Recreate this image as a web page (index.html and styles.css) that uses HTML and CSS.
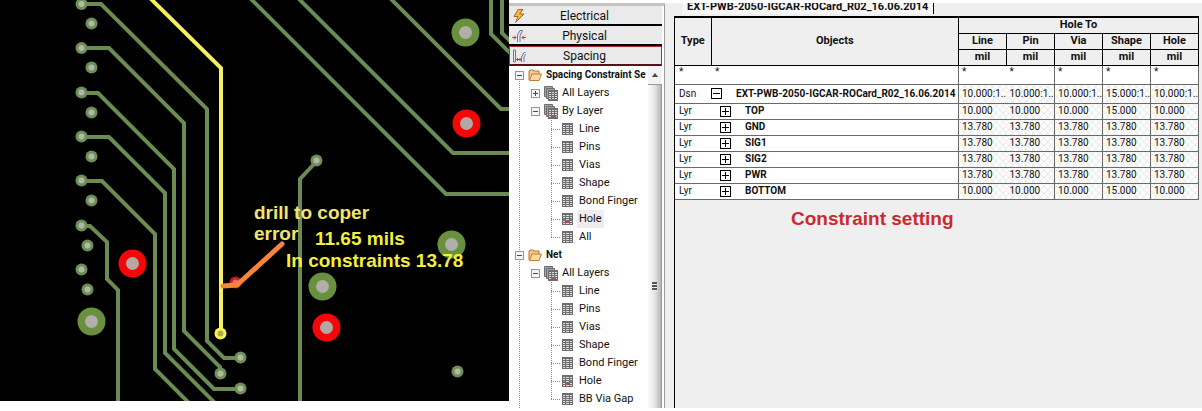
FILE: index.html
```html
<!DOCTYPE html>
<html lang="en">
<head>
<meta charset="utf-8">
<title>Constraint Manager</title>
<link rel="stylesheet" href="styles.css">
</head>
<body>
<svg class="defs" width="0" height="0" aria-hidden="true">
  <defs>
    <symbol id="folder" viewBox="0 0 14 14">
      <path d="M1 12V3l1-1h3l1 1h5v3" fill="#f3c98c" stroke="#b5752f"/>
      <path d="M1.500 12.500L4 6h9.500L11 12.500z" fill="#fbd9a0" stroke="#c07d35"/>
    </symbol>
    <symbol id="grid" viewBox="0 0 11 12">
      <path d="M0 0h11v12H0z" fill="#6c6e70"/>
      <path d="M1 2h2v1H1zM4 2h3v1H4zM8 2h2v1H8zM1 4h2v1H1zM4 4h3v1H4zM8 4h2v1H8zM1 6h2v1H1zM4 6h3v1H4zM8 6h2v1H8zM1 8h2v1H1zM4 8h3v1H4zM8 8h2v1H8zM1 10h2v1H1zM4 10h3v1H4zM8 10h2v1H8z" fill="#dcdcdc"/>
    </symbol>
    <symbol id="layers" viewBox="0 0 14 15">
      <path d="M.5.500h8v10h-8z" fill="#a2a4a6" stroke="#6c6e70"/>
      <path d="M2.500 2.500h8v10h-8z" fill="#a2a4a6" stroke="#6c6e70"/>
      <path d="M4 4h10v11H4z" fill="#6c6e70"/>
      <path d="M5 6h2v1H5zM8 6h2v1H8zM11 6h2v1h-2zM5 8h2v1H5zM8 8h2v1H8zM11 8h2v1h-2zM5 10h2v1H5zM8 10h2v1H8zM11 10h2v1h-2zM5 12h2v1H5zM8 12h2v1H8zM11 12h2v1h-2z" fill="#dcdcdc"/>
    </symbol>
    <g id="pad"><circle r="6" fill="#6f8f59"/><circle r="3" fill="#b0b9a4"/></g>
    <g id="via"><circle r="14" fill="#68903f"/><circle r="6.500" fill="#b2aea9"/></g>
    <g id="hot"><circle r="14" fill="#f20808"/><circle r="6.500" fill="#b2a8a4"/></g>
  </defs>
</svg>
<main class="screen">
  <svg class="board" viewBox="0 0 509 401" role="img" aria-label="Board layout">
    <path d="M0 0h509v401H0z"/>
    <g class="trace">
      <path d="M81 4h20L207 109v232l17 17h16"/>
      <path d="M81 48h28l75 75v208l36 36v6"/>
      <path d="M81 93h17l76 76v180l40 40h26"/>
      <path d="M81 137h28l56 56v160l50 50"/>
      <path d="M81 181h21l53 53v135l35 35"/>
      <path d="M81 226h9l17 16v37l11 11v112"/>
      <path d="M250-2L446 194h64"/>
      <path d="M298-2L453 153h57"/>
      <path d="M390-2L501 109h9"/>
      <path d="M491-2v36l20 20"/>
      <path d="M502-2v35l9 9"/>
      <path d="M316 162l-16 17v223"/>
    </g>
    <use href="#pad" x="81.500" y="4"/><use href="#pad" x="81.500" y="48"/><use href="#pad" x="81.500" y="92.500"/>
    <use href="#pad" x="81.500" y="136.500"/><use href="#pad" x="81.500" y="180.500"/><use href="#pad" x="81.500" y="225.500"/>
    <use href="#pad" x="91.500" y="23.500"/><use href="#pad" x="91.500" y="67.500"/><use href="#pad" x="91.500" y="112.500"/>
    <use href="#pad" x="91.500" y="156.500"/><use href="#pad" x="91.500" y="200.500"/><use href="#pad" x="87.500" y="245.500"/>
    <use href="#pad" x="81.500" y="269.500"/><use href="#pad" x="87.500" y="289.500"/><use href="#pad" x="240.500" y="357.500"/>
    <use href="#pad" x="240.500" y="388.500"/><use href="#pad" x="220.500" y="373.500"/><use href="#pad" x="316.500" y="160.500"/>
    <use href="#pad" x="457.500" y="371.500"/>
    <use href="#via" x="91.500" y="321.500"/><use href="#via" x="465.500" y="32.500"/>
    <use href="#via" x="322.500" y="286.500"/><use href="#via" x="451.500" y="244.500"/>
    <use href="#hot" x="132.500" y="263.500"/><use href="#hot" x="466.500" y="123.500"/><use href="#hot" x="326.500" y="327.500"/>
    <path class="net" d="M150-2l71 70v265"/>
    <circle cx="220.500" cy="333.500" r="6" fill="#f8f652"/><circle cx="220.500" cy="333.500" r="3" fill="#b3ae4c"/>
    <circle cx="235.500" cy="282.500" r="6" fill="#c41f22"/><circle cx="235.500" cy="282.500" r="3" fill="#e2716a"/>
    <path class="pointer" d="M223 286l14-1 45-41"/>
    <g class="note">
      <text class="pale" x="254" y="219">drill to coper</text>
      <text class="pale" x="254" y="240">error</text>
      <text x="315" y="245">11.65 mils</text>
      <text x="286" y="267">In constraints 13.78</text>
    </g>
  </svg>

  <nav class="sidebar" aria-label="Worksheets">
    <div class="tabs">
      <button class="tab"><svg class="tab-icon" viewBox="0 0 14 14"><path d="M6 .5h5L7.500 5H12L3.500 13.500 6 7.500H2z" fill="#f8b83c" stroke="#a9642a"/></svg><span>Electrical</span></button>
      <button class="tab"><svg class="tab-icon" viewBox="0 0 14 14" fill="none"><path d="M5.500 13V6L8 1.500h2.500L8 7v6" stroke="#5f76a0"/><path d="M0 8.500h4M2 6.500l2 2-2 2M14 8.500h-4M12 6.500l-2 2 2 2" stroke="#c23a40"/></svg><span>Physical</span></button>
      <button class="tab active"><svg class="tab-icon" viewBox="0 0 14 14" fill="none"><path d="M1.500 1v12h2V1zM9.500 13V8L12 3.500h1.500M12 13V8l1.500-3" stroke="#6478a8"/><path d="M4 10.500h5M6 9l-1.500 1.500L6 12M7.500 9L9 10.500 7.500 12" stroke="#c23a40"/></svg><span>Spacing</span></button>
    </div>
    <div class="tree-area">
      <ul class="tree">
        <li>
          <div class="row root"><button class="twisty" aria-label="Collapse"></button><svg class="folder"><use href="#folder"/></svg><b>Spacing Constraint Se</b></div>
          <ul>
            <li><div class="row group"><button class="twisty closed" aria-label="Expand"></button><svg class="layers"><use href="#layers"/></svg><span>All Layers</span></div></li>
            <li>
              <div class="row group"><button class="twisty" aria-label="Collapse"></button><svg class="layers"><use href="#layers"/><path d="M7 12h5v2H7z" fill="#b8474c"/></svg><span>By Layer</span></div>
              <ul class="leaves">
                <li class="row leaf"><svg class="grid"><use href="#grid"/></svg><span>Line</span></li>
                <li class="row leaf"><svg class="grid"><use href="#grid"/></svg><span>Pins</span></li>
                <li class="row leaf"><svg class="grid"><use href="#grid"/></svg><span>Vias</span></li>
                <li class="row leaf"><svg class="grid"><use href="#grid"/></svg><span>Shape</span></li>
                <li class="row leaf"><svg class="grid"><use href="#grid"/></svg><span>Bond Finger</span></li>
                <li class="row leaf"><svg class="grid"><use href="#grid"/><path d="M4 8h3v2H4z" fill="#b8474c"/><path d="M1 6h2v1H1zM8 6h2v1H8z" fill="#5f9a62"/></svg><span class="selected">Hole</span></li>
                <li class="row leaf"><svg class="grid"><use href="#grid"/></svg><span>All</span></li>
              </ul>
            </li>
          </ul>
        </li>
        <li>
          <div class="row root"><button class="twisty" aria-label="Collapse"></button><svg class="folder"><use href="#folder"/></svg><b>Net</b></div>
          <ul>
            <li>
              <div class="row group"><button class="twisty" aria-label="Collapse"></button><svg class="layers"><use href="#layers"/><path d="M7 12h5v2H7z" fill="#b8474c"/></svg><span>All Layers</span></div>
              <ul class="leaves">
                <li class="row leaf"><svg class="grid"><use href="#grid"/></svg><span>Line</span></li>
                <li class="row leaf"><svg class="grid"><use href="#grid"/></svg><span>Pins</span></li>
                <li class="row leaf"><svg class="grid"><use href="#grid"/></svg><span>Vias</span></li>
                <li class="row leaf"><svg class="grid"><use href="#grid"/></svg><span>Shape</span></li>
                <li class="row leaf"><svg class="grid"><use href="#grid"/></svg><span>Bond Finger</span></li>
                <li class="row leaf"><svg class="grid"><use href="#grid"/><path d="M4 8h3v2H4z" fill="#b8474c"/><path d="M1 6h2v1H1zM8 6h2v1H8z" fill="#5f9a62"/></svg><span>Hole</span></li>
                <li class="row leaf"><svg class="grid"><use href="#grid"/></svg><span>BB Via Gap</span></li>
              </ul>
            </li>
          </ul>
        </li>
      </ul>
      <div class="scrollbar">
        <button class="scroll-up" aria-label="Scroll up"><svg viewBox="0 0 6 4"><path d="M0 4l3-4 3 4z" fill="#444"/></svg></button>
        <div class="thumb"><i></i></div>
      </div>
    </div>
  </nav>

  <section class="worksheet">
    <div class="sheet-tabs"><span class="sheet-tab">EXT-PWB-2050-IGCAR-ROCard_R02_16.06.2014</span></div>
    <div class="sheet">
      <table class="constraints">
        <colgroup><col class="c-type"><col><col class="c-value"><col class="c-value"><col class="c-value"><col class="c-value"><col class="c-value"></colgroup>
        <thead>
          <tr><th rowspan="3">Type</th><th rowspan="3">Objects</th><th colspan="5">Hole To</th></tr>
          <tr><th>Line</th><th>Pin</th><th>Via</th><th>Shape</th><th>Hole</th></tr>
          <tr><th>mil</th><th>mil</th><th>mil</th><th>mil</th><th>mil</th></tr>
        </thead>
        <tbody>
          <tr class="filter"><td>*</td><td>*</td><td>*</td><td>*</td><td>*</td><td>*</td><td>*</td></tr>
          <tr class="design"><td>Dsn</td><td><div class="object"><button class="box" aria-label="Collapse"></button><b>EXT-PWB-2050-IGCAR-ROCard_R02_16.06.2014</b></div></td><td>10.000:1..</td><td>10.000:1..</td><td>10.000:1..</td><td>15.000:1..</td><td>10.000:1..</td></tr>
          <tr class="layer"><td>Lyr</td><td><div class="object"><button class="box closed" aria-label="Expand"></button><b>TOP</b></div></td><td>10.000</td><td>10.000</td><td>10.000</td><td>15.000</td><td>10.000</td></tr>
          <tr class="layer"><td>Lyr</td><td><div class="object"><button class="box closed" aria-label="Expand"></button><b>GND</b></div></td><td>13.780</td><td>13.780</td><td>13.780</td><td>13.780</td><td>13.780</td></tr>
          <tr class="layer"><td>Lyr</td><td><div class="object"><button class="box closed" aria-label="Expand"></button><b>SIG1</b></div></td><td>13.780</td><td>13.780</td><td>13.780</td><td>13.780</td><td>13.780</td></tr>
          <tr class="layer"><td>Lyr</td><td><div class="object"><button class="box closed" aria-label="Expand"></button><b>SIG2</b></div></td><td>13.780</td><td>13.780</td><td>13.780</td><td>13.780</td><td>13.780</td></tr>
          <tr class="layer"><td>Lyr</td><td><div class="object"><button class="box closed" aria-label="Expand"></button><b>PWR</b></div></td><td>13.780</td><td>13.780</td><td>13.780</td><td>13.780</td><td>13.780</td></tr>
          <tr class="layer"><td>Lyr</td><td><div class="object"><button class="box closed" aria-label="Expand"></button><b>BOTTOM</b></div></td><td>10.000</td><td>10.000</td><td>10.000</td><td>15.000</td><td>10.000</td></tr>
        </tbody>
      </table>
      <p class="caption">Constraint setting</p>
    </div>
  </section>
</main>
</body>
</html>
```
FILE: styles.css
```css
* { box-sizing: border-box; }

body {
  margin: 0;
  background: #fff;
  color: #111;
  font: 10px/14px Roboto, "Liberation Sans", sans-serif;
}

button { font: inherit; color: inherit; padding: 0; margin: 0; border: 0; background: none; }
ul { list-style: none; margin: 0; padding: 0; }
.defs { position: absolute; }

.screen {
  display: grid;
  grid-template-columns: 509fr 156px 537fr;
  align-items: start;
}

/* Board view */
.board { display: block; width: 100%; height: auto; }
.trace { fill: none; stroke: #6b8b53; stroke-width: 4; }
.net { fill: none; stroke: #f5ef62; stroke-width: 4; }
.pointer { fill: none; stroke: #f7843a; stroke-width: 5; stroke-linecap: round; stroke-linejoin: round; }
.note { font: bold 19px "Liberation Sans", sans-serif; fill: #f2ee3c; }
.note .pale { fill: #f0e56c; }

/* Worksheet selector */
.sidebar {
  align-self: stretch;
  margin-top: 3px;
  border-top: 3px solid #c4c4c0;
  border-right: 1px solid #9a9a9a;
  font-size: 11px;
}
.tab {
  display: grid;
  grid-template-columns: 14px 1fr 16px;
  align-items: center;
  width: 153px;
  height: 20px;
  padding: 1px 3px 0;
  border-bottom: 2px solid #000;
  background: #eaeaea;
  font-size: 12px;
}
.tab.active { border: 1px solid #b02a30; border-bottom: 2px solid #5a1014; padding: 0 2px; }
.tab-icon { width: 14px; height: 14px; }

.tree-area { display: grid; grid-template-columns: minmax(0, 1fr) 14px; padding-right: 2px; }
.tree {
  background: repeating-linear-gradient(#8c8c8c 0 1px, transparent 1px 2px) 10px 9px / 1px 100% no-repeat;
}
.row { display: flex; align-items: center; height: 18px; white-space: nowrap; }
.row svg { flex: none; }
.row b { font-size: 10px; }
.root { padding-left: 6px; }
.root .folder { width: 14px; height: 14px; margin: 0 4px; }
.group { padding-left: 22px; }
.layers { width: 14px; height: 15px; margin: 0 4px; }
.leaves { background: repeating-linear-gradient(#8c8c8c 0 1px, transparent 1px 2px) 42px 0 / 1px calc(100% - 9px) no-repeat; }
.leaf {
  padding-left: 53px;
  background: repeating-linear-gradient(90deg, #8c8c8c 0 1px, transparent 1px 2px) 42px 9px / 9px 1px no-repeat;
}
.grid { width: 11px; height: 12px; margin-right: 4px; }
.leaf span { padding: 0 2px; line-height: 18px; }
.leaf .selected { background: #efebee; }

.twisty {
  flex: none;
  width: 9px;
  height: 9px;
  border: 1px solid #8e96a2;
  background: linear-gradient(#334a80, #334a80) center / 5px 1px no-repeat, #f6f6f6;
}
.twisty.closed {
  background: linear-gradient(#334a80, #334a80) center / 5px 1px no-repeat,
    linear-gradient(#334a80, #334a80) center / 1px 5px no-repeat, #f6f6f6;
}

.scrollbar { display: flex; flex-direction: column; }
.scroll-up { display: grid; place-items: center; height: 18px; background: #f3f3f3; }
.scroll-up svg { width: 6px; height: 4px; }
.thumb {
  flex: 1;
  display: grid;
  place-items: center;
  padding-top: 80px;
  border-top: 1px solid #999;
  background: linear-gradient(90deg, #fafafa, #e6e6e6 50%, #b4b4b4);
  border-right: 1px solid #999;
}
.thumb i { width: 5px; height: 9px; background: repeating-linear-gradient(#555 0 2px, #eee 2px 3px); }

/* Constraint worksheet */
.worksheet {
  align-self: stretch;
  display: flex;
  flex-direction: column;
  margin-top: 3px;
  padding-left: 9px;
  background: #efefef;
}
.sheet-tabs { display: flex; height: 13px; padding: 0 0 2px 8px; }
.sheet-tab {
  display: flex;
  align-items: flex-end;
  overflow: hidden;
  padding: 0 5px;
  border-right: 1px solid #000;
  background: #f6f6f6;
  font-size: 11px;
  font-weight: bold;
  line-height: 15px;
}
.sheet { flex: 1; padding-right: 3px; border-left: 1px solid #000; }
.constraints { width: 100%; table-layout: fixed; border-collapse: collapse; border-top: 2px solid #111; background: #fff; }
.c-type { width: 36px; }
.c-value { width: 48px; }
.constraints tr { height: 16px; }
.constraints th { padding: 0; border: 1px solid #000; background: #efefef; font-size: 11px; line-height: 12px; }
.constraints thead tr:first-child th { border-top-width: 2px; }
.constraints thead tr:first-child th:first-child { border-left: 0; }
.constraints td { padding: 0 0 0 4px; border: 1px solid #6a6a6a; line-height: 12px; white-space: nowrap; }
.constraints td:nth-child(1) { border-left: 0; border-right: 0; }
.constraints td:nth-child(2) { border-left: 0; }
.constraints td:nth-child(3) { border-right: 0; }
.constraints td:nth-child(4) { border-left: 0; }
.constraints td:nth-child(n+3) { padding-left: 3px; }
.constraints .filter { height: 19px; vertical-align: top; }
.constraints .design { height: 19px; }
.design td:nth-child(n+3),
.layer td:nth-child(n+3) {
  background: repeating-linear-gradient(45deg, #e2e2e2 0 1px, transparent 1px 5px),
    repeating-linear-gradient(-45deg, #e2e2e2 0 1px, transparent 1px 5px), #fff;
}
.object { display: flex; align-items: center; gap: 14px; }
.design .object { margin-left: -4px; }
.layer .object { margin-left: 5px; }
.box {
  flex: none;
  width: 11px;
  height: 11px;
  border: 1px solid #000;
  background: linear-gradient(#000, #000) center / 7px 1px no-repeat;
}
.box.closed {
  background: linear-gradient(#000, #000) center / 7px 1px no-repeat,
    linear-gradient(#000, #000) center / 1px 7px no-repeat;
}
.caption {
  margin: 8px 0 0 116px;
  color: #cb2a30;
  font: bold 19px/22px "Liberation Sans", sans-serif;
}
```
